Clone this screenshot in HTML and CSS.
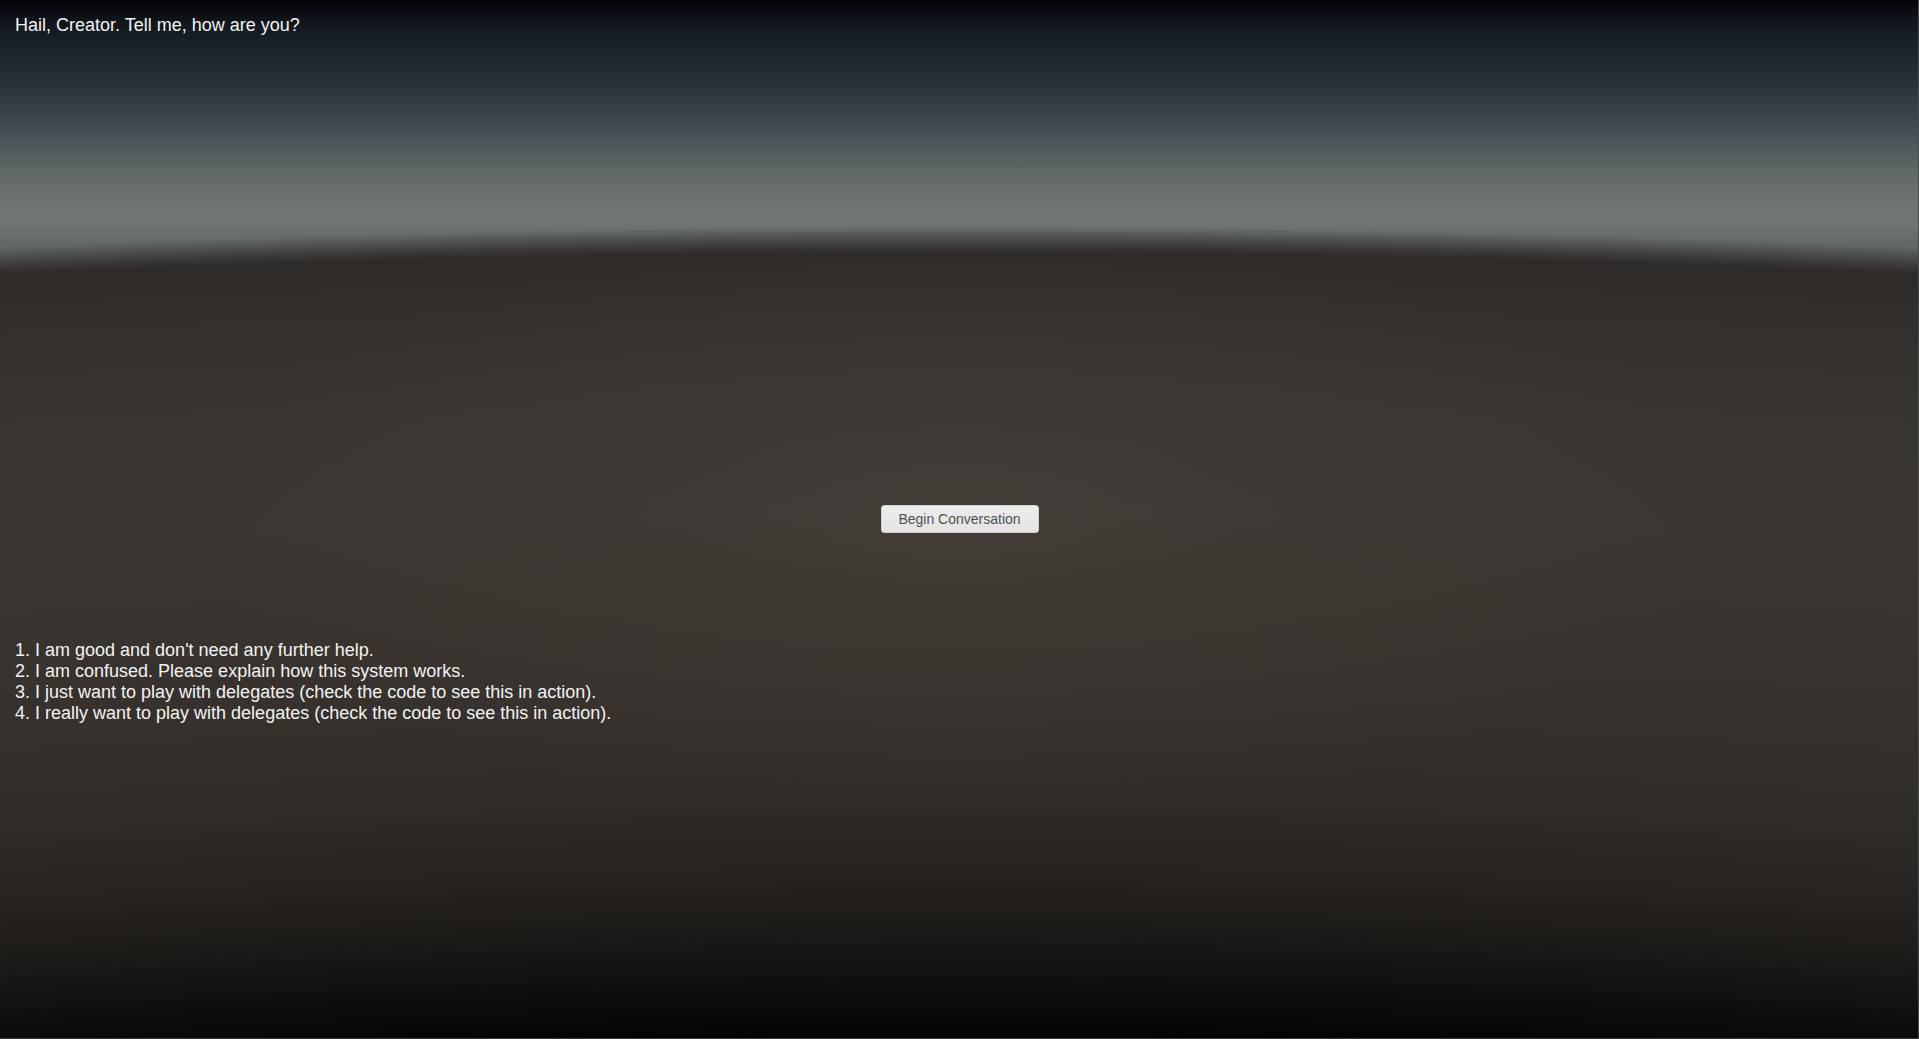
FILE: index.html
```html
<!DOCTYPE html>
<html lang="en">
<head>
<meta charset="utf-8">
<title>Conversation</title>
<link rel="stylesheet" href="styles.css">
</head>
<body>
<main class="screen">
  <p class="greeting">Hail, Creator. Tell me, how are you?</p>
  <div class="action">
    <button class="begin-btn" type="button">Begin Conversation</button>
  </div>
  <ol class="choices">
    <li>1. I am good and don't need any further help.</li>
    <li>2. I am confused. Please explain how this system works.</li>
    <li>3. I just want to play with delegates (check the code to see this in action).</li>
    <li>4. I really want to play with delegates (check the code to see this in action).</li>
  </ol>
</main>
</body>
</html>
```

FILE: styles.css
```css
html, body {
  margin: 0;
  padding: 0;
  height: 100%;
  overflow: hidden;
}

body {
  background: #000;
  font-family: "Liberation Sans", Arial, sans-serif;
}

.screen {
  box-sizing: border-box;
  height: 1039px;
  width: 1919px;
  padding: 15px 15px 0;
  border-right: 1px solid #4a4a4a;
  border-bottom: 1px solid #3a3a3a;
  background-color: #2e2a27;
  background-image:
    radial-gradient(ellipse 760px 300px at 50% 520px, rgba(92, 84, 76, 0.22), rgba(92, 84, 76, 0) 100%),
    radial-gradient(ellipse 6490px 2000px at 50% 2218px,
      #040303 58.95%,
      #0c0b0a 60.8%,
      #181614 63.4%,
      #221f1c 66%,
      #2a2623 68.6%,
      #312d29 72.2%,
      #36312d 76.2%,
      #39342f 81.2%,
      #3b3632 85.2%,
      #393531 90.2%,
      #34302d 95.2%,
      #2f2b29 98.3%,
      rgba(47, 43, 41, 0) 99.6%),
    linear-gradient(to bottom,
      #020305 0px,
      #0b0f13 12px,
      #151b21 30px,
      #1e252c 55px,
      #2a323a 85px,
      #3b434a 115px,
      #4f575c 145px,
      #626968 175px,
      #6d7372 200px,
      #707675 222px,
      #5f6464 250px,
      #555958 275px);
  color: #f2f2f2;
}

.greeting {
  margin: 0;
  font-size: 18px;
  line-height: normal;
}

.action {
  display: flex;
  justify-content: center;
  margin-top: 469px;
}

.begin-btn {
  box-sizing: border-box;
  width: 158px;
  height: 28px;
  padding: 0;
  margin-left: 1px;
  border: 1px solid #cfcfcf;
  border-radius: 3px;
  background: linear-gradient(to bottom, #ececec, #e4e4e4);
  color: #505050;
  font-family: "Liberation Sans", Arial, sans-serif;
  font-size: 14px;
  line-height: normal;
  cursor: pointer;
}

.choices {
  list-style: none;
  margin: 107px 0 0;
  padding: 0;
  font-size: 18px;
  line-height: normal;
}

.choices li {
  margin: 0;
}
```
